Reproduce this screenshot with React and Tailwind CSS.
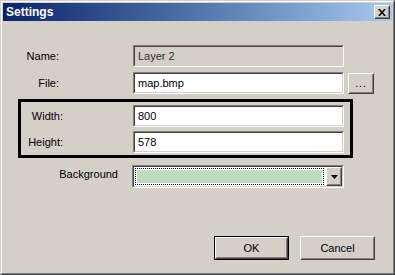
import React from 'react';

const font = { fontFamily: '"Liberation Sans", Arial, sans-serif' };

function Field({ value, disabled, className = '' }) {
  return (
    <div className={`border border-t-[#808080] border-l-[#808080] border-r-white border-b-white ${className}`}>
      <div
        className={`h-full flex items-center pl-[3px] border border-t-[#404040] border-l-[#404040] border-r-[#d4d0c8] border-b-[#d4d0c8] ${
          disabled ? 'bg-[#d4d0c8] text-[#303030]' : 'bg-white text-black'
        }`}
      >
        {value}
      </div>
    </div>
  );
}

function Button({ children, className = '', inner = '' }) {
  return (
    <div className={`border border-t-white border-l-white border-r-[#404040] border-b-[#404040] ${className}`}>
      <div className={`h-full flex items-center justify-center border border-t-[#d4d0c8] border-l-[#d4d0c8] border-r-[#808080] border-b-[#808080] bg-[#d4d0c8] ${inner}`}>
        {children}
      </div>
    </div>
  );
}

export default function App() {
  return (
    <div style={font} className="w-[395px] h-[275px] text-[11px] text-black select-none">
      {/* window frame */}
      <div className="h-full border border-t-[#d4d0c8] border-l-[#d4d0c8] border-r-[#404040] border-b-[#404040]">
        <div className="h-full border border-t-white border-l-white border-r-[#808080] border-b-[#808080] bg-[#d4d0c8] p-px flex flex-col">
          {/* title bar */}
          <div className="h-[18px] shrink-0 flex items-center justify-between bg-linear-to-r from-[#0a246a] to-[#a6caf0] pl-[3px] pr-[2px]">
            <span className="text-white font-bold text-[12px]">Settings</span>
            <Button className="w-[16px] h-[14px]">
              <svg width="8" height="7" viewBox="0 0 8 7">
                <path d="M0 0h2l2 2.5L6 0h2L5 3.5 8 7H6L4 4.5 2 7H0l3-3.5z" fill="#000" />
              </svg>
            </Button>
          </div>

          {/* body */}
          <div className="flex-1 flex flex-col">
            {/* Name */}
            <div className="mt-[24px] flex items-center h-[22px]">
              <div className="w-[56px] text-right">Name:</div>
              <Field value="Layer 2" disabled className="ml-[74px] w-[211px] h-[22px]" />
            </div>

            {/* File */}
            <div className="mt-[5px] flex items-center h-[22px]">
              <div className="w-[56px] text-right">File:</div>
              <Field value="map.bmp" className="ml-[74px] w-[211px] h-[22px]" />
              <Button className="ml-[4px] w-[26px] h-[21px]" inner="items-end pb-[3px]">
                <span className="text-[10px] leading-none tracking-[1px]">...</span>
              </Button>
            </div>

            {/* highlighted size box */}
            <div className="mt-[5px] ml-[15px] w-[335px] h-[59px] border-[3px] border-black flex flex-col">
              <div className="mt-[3px] flex items-center h-[22px]">
                <div className="w-[42px] text-right">Width:</div>
                <Field value="800" className="ml-[70px] w-[211px] h-[22px]" />
              </div>
              <div className="mt-[4px] flex items-center h-[22px]">
                <div className="w-[42px] text-right">Height:</div>
                <Field value="578" className="ml-[70px] w-[211px] h-[22px]" />
              </div>
            </div>

            {/* Background */}
            <div className="mt-[7px] flex items-start">
              <div className="w-[115px] text-right pt-px">Background</div>
              <div className="ml-[14px] w-[212px] h-[23px] border border-t-[#808080] border-l-[#808080] border-r-white border-b-white">
                <div className="h-full flex items-center bg-white border border-t-[#404040] border-l-[#404040] border-r-[#d4d0c8] border-b-[#d4d0c8] pl-px pr-0">
                  <div className="flex-1 h-[17px] border border-dotted border-black p-px bg-white">
                    <div className="h-full bg-[#c0dcc0]" />
                  </div>
                  <Button className="ml-[2px] w-[16px] h-full" inner="">
                    <svg width="7" height="4" viewBox="0 0 7 4">
                      <path d="M0 0h7L3.5 4z" fill="#000" />
                    </svg>
                  </Button>
                </div>
              </div>
            </div>

            {/* buttons */}
            <div className="mt-[48px] flex pl-[211px]">
              <div className="w-[75px] h-[24px] border border-black">
                <Button className="h-full">OK</Button>
              </div>
              <Button className="ml-[11px] w-[75px] h-[24px]">Cancel</Button>
            </div>
          </div>
        </div>
      </div>
    </div>
  );
}
